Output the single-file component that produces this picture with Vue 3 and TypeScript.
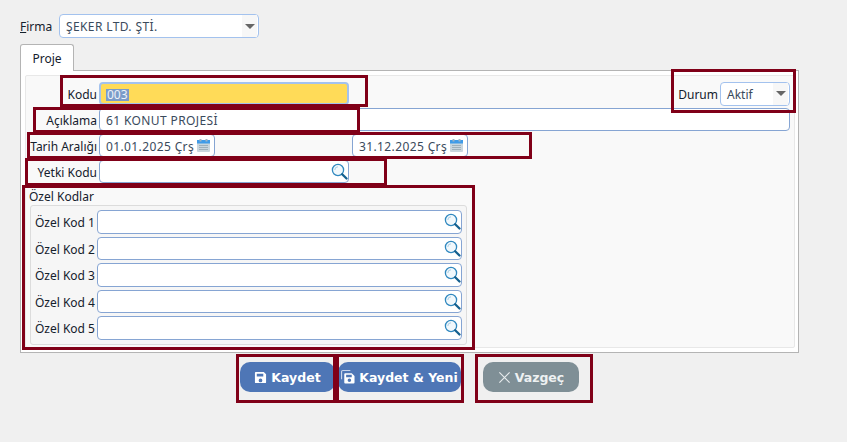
<script setup lang="ts">
const codes: string[] = ['Özel Kod 1', 'Özel Kod 2', 'Özel Kod 3', 'Özel Kod 4', 'Özel Kod 5']
const marks: { cls: string }[] = [
  { cls: 'm1' }, { cls: 'm2' }, { cls: 'm3' }, { cls: 'm4' }, { cls: 'm5' }, { cls: 'm6' }, { cls: 'm7' }, { cls: 'm8' }, { cls: 'm9' }
]
</script>

<template>
  <div class="page">
    <div class="firma-row">
      <label class="firma-label"><u>F</u>irma</label>
      <div class="select firma-select"><span class="caps">ŞEKER LTD. ŞTİ.</span><span class="caret-box"><i class="caret"></i></span></div>
    </div>
    <div class="tabs"><div class="tab">Proje</div></div>
    <div class="panel">
      <div class="inner">
        <div class="row first">
          <label class="lbl">Kodu</label>
          <div class="input kodu"><span class="sel">003</span></div>
          <div class="durum">
            <label class="durum-lbl">Durum</label>
            <div class="select durum-select"><span class="shift">Aktif</span><span class="caret-box"><i class="caret"></i></span></div>
          </div>
        </div>
        <div class="row">
          <label class="lbl">Açıklama</label>
          <div class="input wide"><span class="caps">61 KONUT PROJESİ</span></div>
        </div>
        <div class="row">
          <label class="lbl">Tarih Aralığı</label>
          <div class="input date"><span class="caps">01.01.2025 Çrş</span>
            <svg class="cal" viewBox="0 0 13 13"><rect x="0" y="1" width="13" height="12" rx="1" fill="#c9d6de"/><rect x="0" y="1" width="13" height="3.5" fill="#3f9be8"/><rect x="2.5" y="0" width="2" height="2.5" fill="#9fb4c2"/><rect x="8.5" y="0" width="2" height="2.5" fill="#9fb4c2"/><path d="M2 6.5h9M2 8.5h9M2 10.5h9" stroke="#9fb0ba" stroke-width="1"/></svg>
          </div>
          <div class="input date second"><span class="caps">31.12.2025 Çrş</span>
            <svg class="cal" viewBox="0 0 13 13"><rect x="0" y="1" width="13" height="12" rx="1" fill="#c9d6de"/><rect x="0" y="1" width="13" height="3.5" fill="#3f9be8"/><rect x="2.5" y="0" width="2" height="2.5" fill="#9fb4c2"/><rect x="8.5" y="0" width="2" height="2.5" fill="#9fb4c2"/><path d="M2 6.5h9M2 8.5h9M2 10.5h9" stroke="#9fb0ba" stroke-width="1"/></svg>
          </div>
        </div>
        <div class="row">
          <label class="lbl">Yetki Kodu</label>
          <div class="input lookup">
            <svg class="mag" viewBox="0 0 17 17"><circle cx="7" cy="7" r="5.600" fill="#f1f8fc" stroke="#3088bf" stroke-width="1.300"/><path d="M3.800 7a3.200 3.200 0 0 1 3.200-3.200" fill="none" stroke="#a9cfe6"/><path d="M11.200 11.200l4.300 4.300" stroke="#14608f" stroke-width="2.300" stroke-linecap="round"/></svg>
          </div>
        </div>
        <div class="group-title">Özel Kodlar</div>
        <div class="group">
          <div v-for="c in codes" :key="c" class="code-row">
            <label class="code-lbl">{{ c }}</label>
            <div class="input code-input">
              <svg class="mag" viewBox="0 0 17 17"><circle cx="7" cy="7" r="5.600" fill="#f1f8fc" stroke="#3088bf" stroke-width="1.300"/><path d="M3.800 7a3.200 3.200 0 0 1 3.200-3.200" fill="none" stroke="#a9cfe6"/><path d="M11.200 11.200l4.300 4.300" stroke="#14608f" stroke-width="2.300" stroke-linecap="round"/></svg>
            </div>
          </div>
        </div>
      </div>
    </div>
    <div class="actions">
      <button class="btn primary b1">
        <svg class="ico" viewBox="0 0 14 14"><path fill-rule="evenodd" d="M2 1h8.500L13 3.500V12a1 1 0 0 1-1 1H2a1 1 0 0 1-1-1V2a1 1 0 0 1 1-1zm1 2v3h7V3zm4 5.200a2 2 0 1 0 0 4 2 2 0 0 0 0-4z" fill="#fff"/></svg>
        Kaydet
      </button>
      <button class="btn primary b2">
        <svg class="ico ico2" viewBox="0 0 15 15"><path d="M.6 10V2A1.400 1.400 0 0 1 2 .6h8" fill="none" stroke="#c8d4ea" stroke-width="1.200"/><path fill-rule="evenodd" d="M4.500 3.500h7L14.500 6.500v7a1 1 0 0 1-1 1h-9a1 1 0 0 1-1-1v-9a1 1 0 0 1 1-1zm1 1.600v2.600h6V5.100zm3.500 4a1.900 1.900 0 1 0 0 3.800 1.900 1.900 0 0 0 0-3.800z" fill="#fff"/></svg>
        Kaydet &amp; Yeni
      </button>
      <button class="btn cancel b3">
        <svg class="ico x" viewBox="0 0 14 14"><path d="M1.500 1.500l11 11M12.500 1.500l-11 11" stroke="#e8ecee" stroke-width="1.200" fill="none"/></svg>
        Vazgeç
      </button>
    </div>
    <div v-for="m in marks" :key="m.cls" class="mark" :class="m.cls"></div>
  </div>
</template>

<style>
html, body { margin: 0; background: #f0f0f0; }
</style>

<style scoped>
.page {
  position: relative;
  width: 847px;
  height: 442px;
  box-sizing: border-box;
  padding: 14px 49px 0 20px;
  background: #f0f0f0;
  font-family: "Noto Sans", Tahoma, sans-serif;
  font-size: 12px;
  color: #14202c;
  overflow: hidden;
}
.firma-row { display: flex; align-items: center; gap: 6px; height: 24px; }
.firma-label { width: 33px; }
.caps { letter-spacing: .38px; }
.shift { padding-top: 2px; }
.select {
  box-sizing: border-box;
  display: flex;
  align-items: center;
  justify-content: space-between;
  height: 24px;
  padding: 0 0 0 6px;
  background: #fff;
  border: 1px solid #a3c2ee;
  border-radius: 4px;
  color: #3a4a5c;
}
.firma-select { width: 200px; }
.caret-box {
  display: flex;
  align-items: center;
  justify-content: center;
  align-self: stretch;
  width: 15px;
  margin-right: 1px;
  background: #f7f7f7;
}
.caret {
  width: 0;
  height: 0;
  border-left: 5px solid transparent;
  border-right: 5px solid transparent;
  border-top: 5px solid #666;
}
.tabs { display: flex; margin-top: 6px; height: 26px; }
.tab {
  box-sizing: border-box;
  width: 54px;
  height: 27px;
  padding-top: 5px;
  text-align: center;
  background: #fff;
  border: 1px solid #b4b4b4;
  border-bottom: none;
  border-radius: 3px 3px 0 0;
  position: relative;
  z-index: 1;
}
.panel {
  box-sizing: border-box;
  width: 779px;
  height: 283px;
  padding: 4px 3px 4px 4px;
  background: #fff;
  border: 1px solid #b4b4b4;
}
.inner {
  box-sizing: border-box;
  height: 100%;
  padding: 6px 4px 0 0;
  background: #f9f9f9;
  border: 1px solid #e8e8e8;
  border-radius: 2px;
}
.row { display: flex; align-items: center; gap: 2px; height: 23px; margin-bottom: 3px; }
.lbl { width: 71px; padding-top: 2px; text-align: right; white-space: nowrap; }
.durum-lbl { padding-top: 2px; }
.input {
  box-sizing: border-box;
  display: flex;
  align-items: center;
  height: 23px;
  padding: 2px 6px 0;
  background: #fff;
  border: 1px solid #86a5d3;
  border-radius: 4px;
  color: #3a4a5c;
  white-space: nowrap;
}
.kodu { width: 250px; background: #ffdb58; border: 2px solid #a3c2ee; padding-left: 5px; }
.sel { background: #7b9bc9; color: #eef2f8; padding: 0 1px; line-height: 12px; }
.durum { margin-left: auto; display: flex; align-items: center; gap: 2px; }
.durum-select { width: 70px; }
.wide { flex: 1; }
.date { width: 116px; justify-content: space-between; padding-right: 4px; }
.second { margin-left: 135px; }
.cal { width: 13px; height: 13px; flex: none; margin-top: -2px; }
.lookup { width: 250px; justify-content: flex-end; padding-right: 0; }
.mag { width: 17px; height: 17px; flex: none; margin-top: -2px; }
.group-title { margin: 5px 0 0 3px; height: 17px; line-height: 18px; }
.group {
  box-sizing: border-box;
  width: 437px;
  height: 140px;
  margin: 0 0 0 4px;
  padding: 4px 4px 0 0;
  background: #f6f6f6;
  border: 1px solid #dcdcdc;
  border-radius: 3px;
}
.code-row { display: flex; align-items: center; gap: 2px; height: 23.500px; margin-bottom: 3px; }
.code-lbl { width: 64px; padding-top: 2px; text-align: right; white-space: nowrap; }
.code-input { width: 365px; height: 23.500px; justify-content: flex-end; padding-right: 0; }
.actions { display: flex; margin-top: 9px; padding-left: 220px; }
.btn {
  box-sizing: border-box;
  display: inline-flex;
  align-items: center;
  justify-content: center;
  gap: 4px;
  height: 30px;
  padding: 0;
  border: none;
  border-radius: 10px;
  color: #fff;
  font: bold 12.500px "DejaVu Sans", sans-serif;
}
.primary { background: #4e76b6; }
.cancel { background: #7f8f96; color: #eef1f2; }
.b1 { width: 95px; }
.b2 { width: 123px; margin-left: 3px; }
.b3 { width: 96px; margin-left: 22px; }
.ico { width: 13px; height: 13px; flex: none; }
.ico2 { width: 14px; height: 14px; }
.mark { position: absolute; box-sizing: border-box; border: 3px solid #800018; pointer-events: none; }
.m1 { left: 60px; top: 75px; width: 308px; height: 32px; }
.m2 { left: 33px; top: 107px; width: 327px; height: 26px; }
.m3 { left: 27px; top: 132px; width: 505px; height: 27px; }
.m4 { left: 25px; top: 158px; width: 362px; height: 28px; }
.m5 { left: 22px; top: 185px; width: 453px; height: 165px; }
.m6 { left: 671px; top: 69px; width: 125px; height: 44px; }
.m7 { left: 236px; top: 354px; width: 100px; height: 49px; }
.m8 { left: 336px; top: 354px; width: 128px; height: 49px; }
.m9 { left: 475px; top: 354px; width: 118px; height: 49px; }
</style>
